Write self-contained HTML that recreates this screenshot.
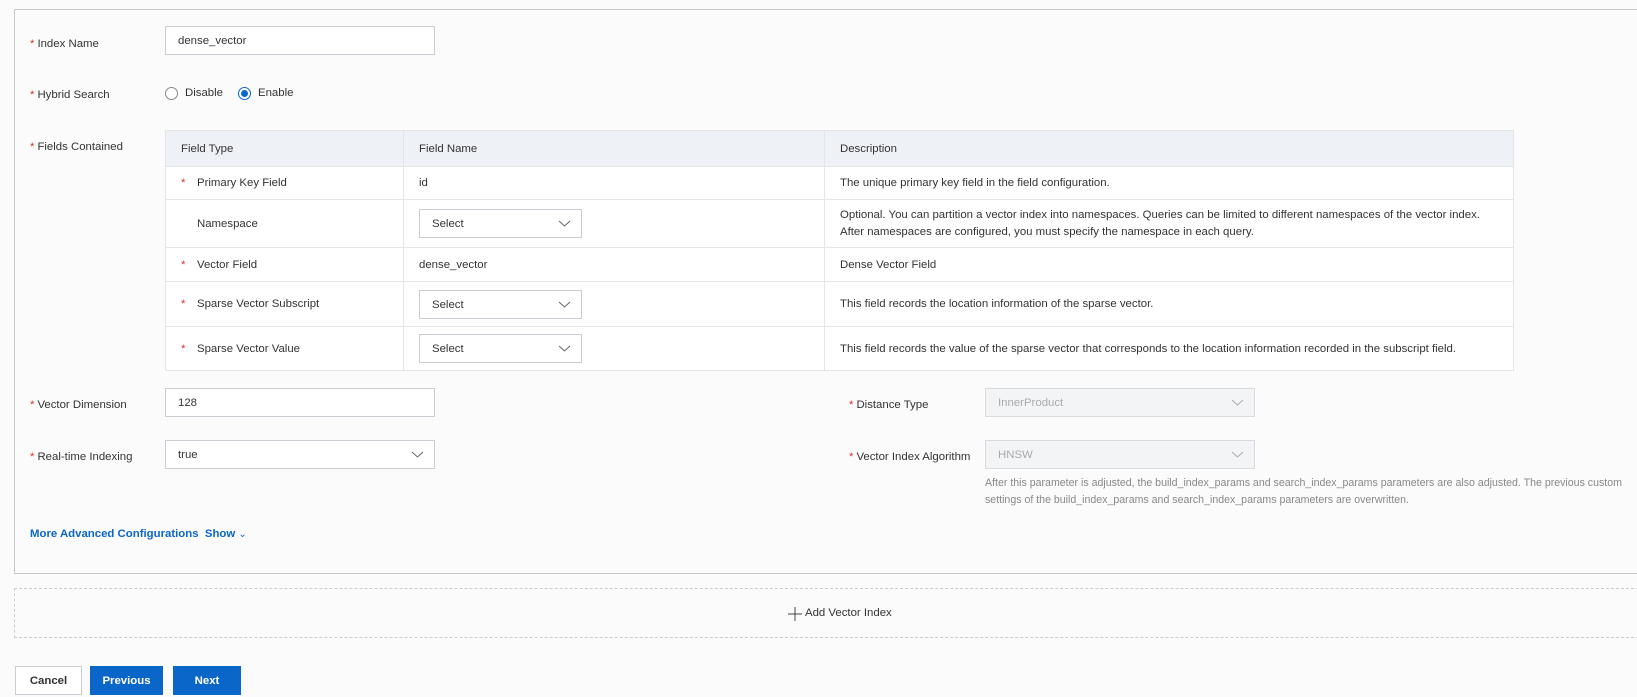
<!DOCTYPE html>
<html><head><style>
*{box-sizing:border-box;margin:0;padding:0}
body{width:1637px;height:697px;background:#fbfbfb;font-family:"Liberation Sans",sans-serif;font-size:11.4px;color:#333;position:relative;overflow:hidden}
.a{position:absolute}
.lbl{position:absolute;left:30px;color:#333;line-height:14px}
.lbl i{color:#d93026;font-style:normal;margin-right:3px}
.inp{position:absolute;height:29px;border:1px solid #c9cdd4;background:#fff;padding:0 12px;line-height:29px;color:#333}
.dis{background:#f3f4f6;color:#aaa;border-color:#d8dbe0}
.chev{position:absolute;right:10px;top:10px;width:13px;height:7px}
table{position:absolute;left:165px;top:130px;width:1349px;border-collapse:collapse;background:#fff;table-layout:fixed}
td,th{border:1px solid #e3e5e8;font-weight:normal;text-align:left;padding:0 15px;color:#333}
th{background:#eef1f5;height:36px}
td i{color:#d93026;font-style:normal;display:inline-block;width:16px}
.sel{position:relative;width:163px;height:29px;border:1px solid #c9cdd4;background:#fff;padding:0 12px;line-height:29px}
.btn{position:absolute;top:666px;height:29px;line-height:30px;text-align:center;font-weight:bold}
</style></head><body>
<div class="a" style="left:14px;top:9px;width:1640px;height:565px;border:1px solid #c4c8cd;"></div>
<div class="lbl" style="top:37px"><i>*</i>Index Name</div>
<div class="inp" style="left:165px;top:26px;width:270px">dense_vector</div>
<div class="lbl" style="top:88px"><i>*</i>Hybrid Search</div>
<div class="a" style="left:165px;top:87px;width:13px;height:13px;border:1px solid #888;border-radius:50%;background:#fff"></div>
<div class="a" style="left:185px;top:87px">Disable</div>
<div class="a" style="left:238px;top:87px;width:13px;height:13px;border:1px solid #0a66c8;border-radius:50%;background:#fff"><div style="margin:2px;width:7px;height:7px;border-radius:50%;background:#0a66c8"></div></div>
<div class="a" style="left:258px;top:87px">Enable</div>
<div class="lbl" style="top:140px"><i>*</i>Fields Contained</div>
<table>
<colgroup><col style="width:238px"><col style="width:421px"><col></colgroup>
<tr><th>Field Type</th><th>Field Name</th><th>Description</th></tr>
<tr style="height:33px"><td><i>*</i>Primary Key Field</td><td>id</td><td>The unique primary key field in the field configuration.</td></tr>
<tr style="height:48px"><td><i></i>Namespace</td><td><div class="sel">Select<svg class="chev" viewBox="0 0 13 7"><path d="M1 1l5.5 5 5.5-5" fill="none" stroke="#666"/></svg></div></td><td style="line-height:17px">Optional. You can partition a vector index into namespaces. Queries can be limited to different namespaces of the vector index. After namespaces are configured, you must specify the namespace in each query.</td></tr>
<tr style="height:34px"><td><i>*</i>Vector Field</td><td>dense_vector</td><td>Dense Vector Field</td></tr>
<tr style="height:45px"><td><i>*</i>Sparse Vector Subscript</td><td><div class="sel">Select<svg class="chev" viewBox="0 0 13 7"><path d="M1 1l5.5 5 5.5-5" fill="none" stroke="#666"/></svg></div></td><td>This field records the location information of the sparse vector.</td></tr>
<tr style="height:44px"><td><i>*</i>Sparse Vector Value</td><td><div class="sel">Select<svg class="chev" viewBox="0 0 13 7"><path d="M1 1l5.5 5 5.5-5" fill="none" stroke="#666"/></svg></div></td><td>This field records the value of the sparse vector that corresponds to the location information recorded in the subscript field.</td></tr>
</table>
<div class="lbl" style="top:398px"><i>*</i>Vector Dimension</div>
<div class="inp" style="left:165px;top:388px;width:270px">128</div>
<div class="lbl" style="top:450px"><i>*</i>Real-time Indexing</div>
<div class="inp" style="left:165px;top:440px;width:270px">true<svg class="chev" viewBox="0 0 13 7"><path d="M1 1l5.5 5 5.5-5" fill="none" stroke="#666"/></svg></div>
<div class="lbl" style="left:849px;top:398px"><i>*</i>Distance Type</div>
<div class="inp dis" style="left:985px;top:388px;width:270px">InnerProduct<svg class="chev" viewBox="0 0 13 7"><path d="M1 1l5.5 5 5.5-5" fill="none" stroke="#aaa"/></svg></div>
<div class="lbl" style="left:849px;top:450px"><i>*</i>Vector Index Algorithm</div>
<div class="inp dis" style="left:985px;top:440px;width:270px">HNSW<svg class="chev" viewBox="0 0 13 7"><path d="M1 1l5.5 5 5.5-5" fill="none" stroke="#aaa"/></svg></div>
<div class="a" style="left:985px;top:475px;width:650px;color:#888;line-height:17px;font-size:10.6px">After this parameter is adjusted, the build_index_params and search_index_params parameters are also adjusted. The previous custom settings of the build_index_params and search_index_params parameters are overwritten.</div>
<div class="a" style="left:30px;top:528px;color:#0a66c8;font-weight:bold">More Advanced Configurations &nbsp;Show <span style="font-weight:normal;font-size:10px">&#8964;</span></div>
<div class="a" style="left:14px;top:588px;width:1640px;height:50px;border:1px dashed #c9cdd2"></div>
<svg class="a" style="left:788px;top:607px" width="14" height="14" viewBox="0 0 14 14"><path d="M7 0v14M0 7h14" stroke="#444" stroke-width="1"/></svg>
<div class="a" style="left:805px;top:607px;color:#333">Add Vector Index</div>
<div class="btn" style="left:15px;width:67px;border:1px solid #c9cdd4;background:#fff;color:#333;line-height:28px">Cancel</div>
<div class="btn" style="left:90px;width:73px;background:#0a66c8;color:#fff">Previous</div>
<div class="btn" style="left:173px;width:68px;background:#0a66c8;color:#fff">Next</div>
</body></html>
